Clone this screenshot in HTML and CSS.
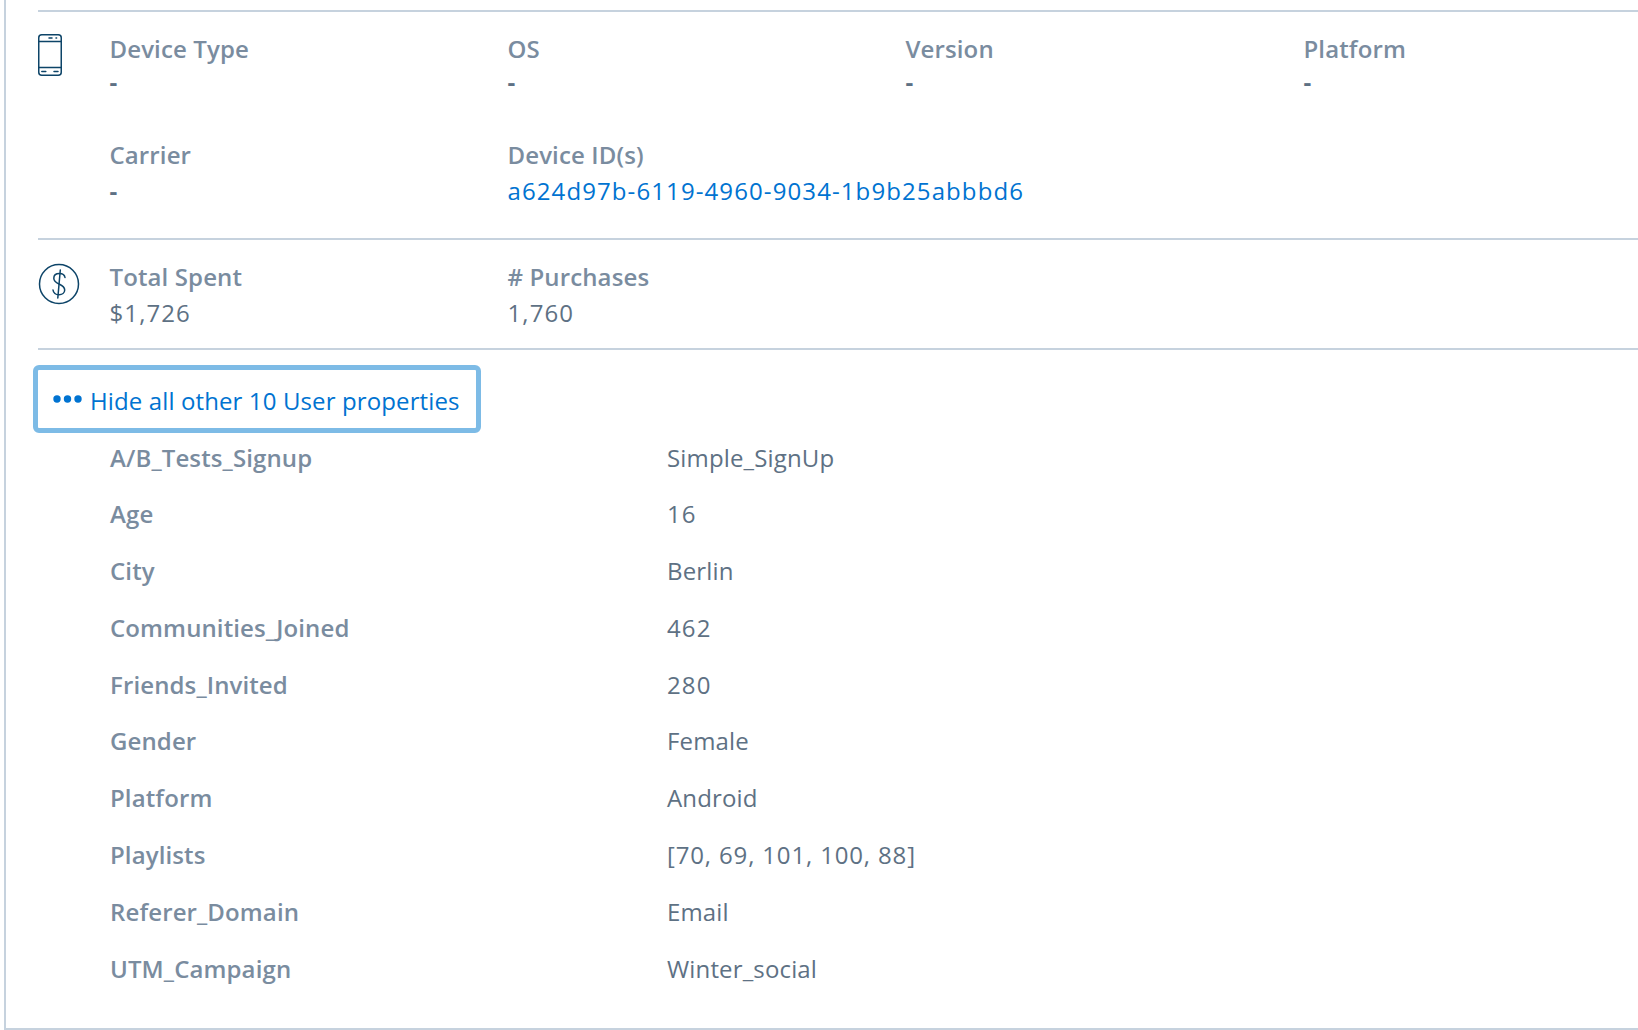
FILE: index.html
```html
<!DOCTYPE html>
<html lang="en">
<head>
<meta charset="utf-8">
<title>User properties</title>
<link rel="stylesheet" href="styles.css">
</head>
<body>
<main class="frame">
  <section class="block device">
    <svg class="icon phone" width="24" height="42" viewBox="0 0 24 42" fill="none" stroke="#0d4468" stroke-width="1.5" stroke-linecap="round">
      <rect x="0.75" y="0.75" width="22.5" height="40.5" rx="3"/>
      <path d="M1 7.5H23M1 33.5H23"/>
      <path d="M11 4H14M18 4H18.6M3.8 37.5H7.8M16 37.5H20"/>
    </svg>
    <div class="facts">
      <div class="fact"><div class="label">Device Type</div><div class="value dash raised">-</div></div>
      <div class="fact"><div class="label">OS</div><div class="value dash raised">-</div></div>
      <div class="fact"><div class="label">Version</div><div class="value dash raised">-</div></div>
      <div class="fact"><div class="label">Platform</div><div class="value dash raised">-</div></div>
      <div class="fact"><div class="label">Carrier</div><div class="value dash">-</div></div>
      <div class="fact wide"><div class="label">Device ID(s)</div><a class="value num link" href="#">a624d97b-6119-4960-9034-1b9b25abbbd6</a></div>
    </div>
  </section>
  <section class="block spend">
    <svg class="icon dollar" width="42" height="42" viewBox="0 0 42 42" fill="none" stroke="#0d4468" stroke-width="1.5" stroke-linecap="round">
      <circle cx="21" cy="21" r="19.5"/>
      <path d="M27 14.5C26.5 11.5 24 10.5 21.5 10.5C18 10.5 15.8 12.5 15.8 15.2C15.8 18.5 18.5 19.8 21 21C24 22.4 26.7 23.8 26.7 27C26.7 30 24 31.8 21 31.8C18 31.8 15.5 30.2 15 27"/>
      <path d="M22.3 7L19.8 35"/>
    </svg>
    <div class="facts">
      <div class="fact"><div class="label">Total Spent</div><div class="value num">$1,726</div></div>
      <div class="fact"><div class="label"># Purchases</div><div class="value num">1,760</div></div>
    </div>
  </section>
  <section class="block others">
    <a class="toggle" href="#">
      <svg class="dots" width="29" height="8" viewBox="0 0 29 8" fill="#0073d1"><circle cx="4" cy="4" r="3.7"/><circle cx="14.5" cy="4" r="3.7"/><circle cx="25" cy="4" r="3.7"/></svg>
      <span>Hide all other 10 User properties</span>
    </a>
    <dl class="props">
      <div class="prop"><dt>A/B_Tests_Signup</dt><dd>Simple_SignUp</dd></div>
      <div class="prop"><dt>Age</dt><dd class="num">16</dd></div>
      <div class="prop"><dt>City</dt><dd>Berlin</dd></div>
      <div class="prop"><dt>Communities_Joined</dt><dd class="num">462</dd></div>
      <div class="prop"><dt>Friends_Invited</dt><dd class="num">280</dd></div>
      <div class="prop"><dt>Gender</dt><dd>Female</dd></div>
      <div class="prop"><dt>Platform</dt><dd>Android</dd></div>
      <div class="prop"><dt>Playlists</dt><dd class="num list">[70, 69, 101, 100, 88]</dd></div>
      <div class="prop"><dt>Referer_Domain</dt><dd>Email</dd></div>
      <div class="prop"><dt>UTM_Campaign</dt><dd>Winter_social</dd></div>
    </dl>
  </section>
</main>
</body>
</html>
```
FILE: styles.css
```css
* { box-sizing: border-box; }
html, body { margin: 0; padding: 0; background: #fff; overflow: hidden; }
body {
  width: 1638px;
  height: 1030px;
  font-family: "Open Sans", "Noto Sans", "Liberation Sans", sans-serif;
  font-size: 24px;
  line-height: 36px;
  color: #5e7184;
}
.frame {
  margin-left: 4px;
  height: 1030px;
  padding: 10px 0 0 32px;
  border-left: 2px solid #c6d2de;
  border-bottom: 2px solid #c6d2de;
}
.block {
  display: flex;
  border-top: 2px solid #c6d2de;
}
.device { height: 228px; padding-top: 19px; }
.spend { height: 110px; padding-top: 19px; }
.others { display: block; padding-top: 15px; }
.icon { flex: none; }
.phone { margin: 3px 47.5px 0 0; }
.dollar { margin: 4px 29.5px 0 0; }
.facts {
  display: grid;
  grid-template-columns: repeat(4, 398px);
  row-gap: 34px;
  align-content: start;
}
.label, dt { font-weight: 600; color: #7a8c9f; letter-spacing: 0.12px; }
.value, dd { display: block; margin: 0; letter-spacing: 0.15px; }
.dash { font-weight: 700; }
.raised { margin-top: -3px; margin-bottom: 3px; }
.num { letter-spacing: 1.1px; }
.list { letter-spacing: 0.85px; }
.wide { grid-column: span 3; }
.link { color: #0073d1; text-decoration: none; }
.toggle {
  display: flex;
  align-items: center;
  gap: 8px;
  width: 448px;
  height: 68px;
  margin-left: -5px;
  padding: 4px 0 0 15px;
  border: 5px solid #7dbbe6;
  border-radius: 6px;
  color: #0073d1;
  text-decoration: none;
  letter-spacing: 0.12px;
}
.dots { flex: none; margin-top: -4px; }
.props {
  margin: 6.5px 0 0;
  display: grid;
  row-gap: 20.8px;
}
.prop { display: grid; grid-template-columns: 557px 1fr; padding-left: 72px; }
```
